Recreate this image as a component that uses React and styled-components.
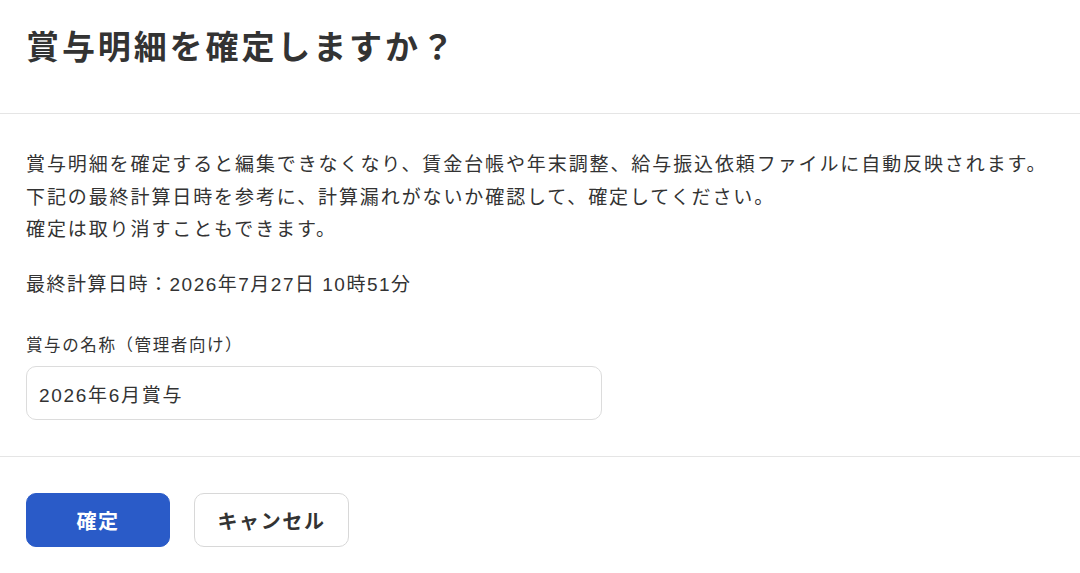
import React from "react";
import styled, { createGlobalStyle } from "styled-components";

const Global = createGlobalStyle`
  html, body { margin: 0; padding: 0; background: #fff; }
  body { font-family: "Liberation Sans", "Noto Sans CJK JP", sans-serif; color: #333; }
  * { box-sizing: border-box; }
`;

const Dialog = styled.div`
  width: 1080px;
  height: 573px;
  background: #fff;
  display: flex;
  flex-direction: column;
`;

const Header = styled.header`
  padding: 20px 26px 37px;
  border-bottom: 1px solid #e5e5e5;
`;

const Title = styled.h1`
  margin: 0;
  font-size: 33px;
  line-height: 56px;
  font-weight: 700;
  letter-spacing: 2.9px;
  color: #333;
`;

const Body = styled.section`
  padding: 35px 26px 36px;
  border-bottom: 1px solid #e5e5e5;
  display: flex;
  flex-direction: column;
`;

const Paragraph = styled.p`
  margin: 0;
  font-size: 19px;
  line-height: 32.5px;
  letter-spacing: 0.1em;
`;

const Meta = styled(Paragraph)`
  margin-top: 22.5px;
  letter-spacing: 1.5px;
`;

const Label = styled.label`
  margin-top: 31.5px;
  font-size: 16.5px;
  line-height: 24px;
  letter-spacing: 1.6px;
`;

const Input = styled.input`
  margin-top: 9px;
  width: 576px;
  height: 54px;
  border: 1px solid #dcdcdc;
  border-radius: 10px;
  padding: 0 12px;
  font-family: inherit;
  font-size: 19px;
  letter-spacing: 1.7px;
  color: #333;
  outline: none;
`;

const Footer = styled.footer`
  padding: 36px 26px;
  display: flex;
  gap: 24px;
`;

const Button = styled.button`
  height: 54px;
  min-width: ${(p) => p.$w}px;
  border-radius: 10px;
  font-family: inherit;
  font-size: 20px;
  font-weight: 700;
  letter-spacing: 1.6px;
  cursor: pointer;
  border: 1px solid ${(p) => (p.$primary ? "#2a5bc8" : "#d8d8d8")};
  background: ${(p) => (p.$primary ? "#2a5bc8" : "#fff")};
  color: ${(p) => (p.$primary ? "#fff" : "#333")};
`;

export default function App() {
  return (
    <>
      <Global />
      <Dialog>
        <Header>
          <Title>賞与明細を確定しますか？</Title>
        </Header>
        <Body>
          <Paragraph>
            賞与明細を確定すると編集できなくなり、賃金台帳や年末調整、給与振込依頼ファイルに自動反映されます。
            <br />
            下記の最終計算日時を参考に、計算漏れがないか確認して、確定してください。
            <br />
            確定は取り消すこともできます。
          </Paragraph>
          <Meta>最終計算日時：2026年7月27日 10時51分</Meta>
          <Label htmlFor="bonus-name">賞与の名称（管理者向け）</Label>
          <Input id="bonus-name" defaultValue="2026年6月賞与" />
        </Body>
        <Footer>
          <Button $primary $w={144}>確定</Button>
          <Button $w={155}>キャンセル</Button>
        </Footer>
      </Dialog>
    </>
  );
}
